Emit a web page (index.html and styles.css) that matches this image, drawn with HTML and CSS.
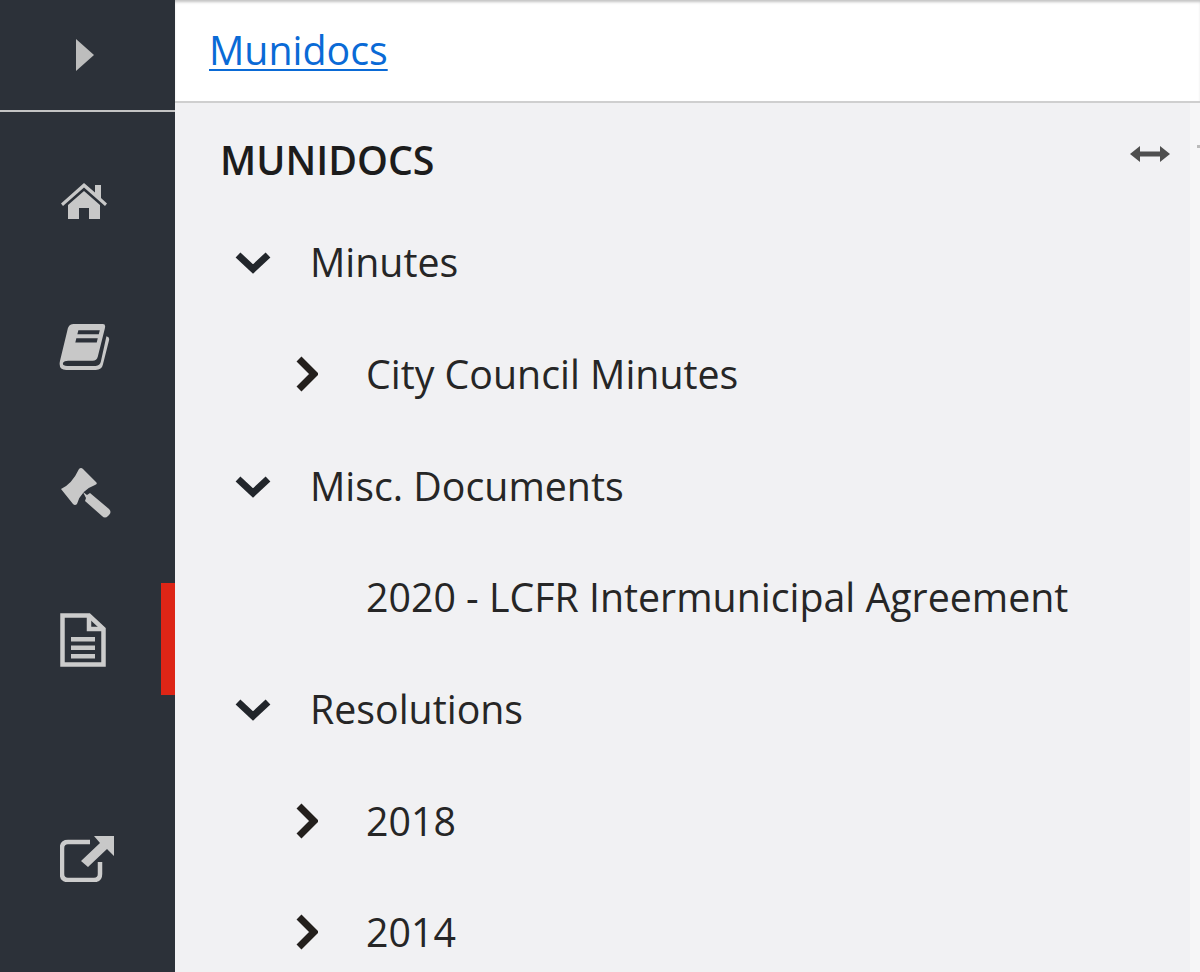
FILE: index.html
```html
<!DOCTYPE html>
<html lang="en">
<head>
<meta charset="utf-8">
<title>Munidocs</title>
<link rel="stylesheet" href="styles.css">
</head>
<body>
<div class="app">
  <aside class="sidebar">
    <div class="toggle">
      <svg class="ic-toggle" viewBox="0 0 20 34"><path d="M1 1 L19 17 L1 33 Z"/></svg>
    </div>
    <nav class="nav">
      <a class="nav-item">
        <svg class="ic" viewBox="0 0 48 40"><path d="M24 3 L35 12.500 V5 H41 V18 L47 23.500 L45 26 L24 7.500 L3 26 L1 23.500 Z"/><path d="M24 11 L40 25 V39 H29 V28 H19 V39 H8 V25 Z"/></svg>
      </a>
      <a class="nav-item">
        <svg class="ic ic-book" viewBox="0 0 50 46"><path fill-rule="evenodd" d="M14 1 H43 Q46 1 45 5 L38 33 Q37 37 33 37 H9 Q5 37 4 39 Q3 42 8 42 H36 Q40 42 41 38 L46.500 13 Q50 14 49 17 L43 41 Q42 46 36 46 H7 Q-1 46 1 37 L8 8 Q9 1 14 1 Z M19 7 L18 11 H39 L40 7 Z M17 15 L16 19 H37 L38 15 Z"/></svg>
      </a>
      <a class="nav-item">
        <svg class="ic ic-gavel" viewBox="0 0 52 50"><path d="M1 21 Q12 16 19 1 Q21 -1 23 1 L36 14 Q38 16 35 17 Q21 22 17 36 Q15 38 13 36 Z"/><path d="M23 24 L27 27 L30 25 L49 41 Q52 44 49 47 L48 48 Q45 51 42 48 L25 33 L26 30 Z"/></svg>
      </a>
      <a class="nav-item doc-active">
        <svg class="ic ic-doc" viewBox="0 0 46 54"><path class="line" d="M2.500 2.500 H29 L43.500 16 V51.500 H2.500 Z"/><path class="line" d="M29 2.500 V16 H43.500"/><path d="M11 24 H35 V28.500 H11 Z M11 32.500 H35 V37 H11 Z M11 41 H35 V45.500 H11 Z"/></svg>
      </a>
      <a class="nav-item nav-external">
        <svg class="ic ic-ext" viewBox="0 0 54 46"><path class="line" d="M30 6 H8 Q2 6 2 12 V38 Q2 44 8 44 H34 Q40 44 40 38 V26"/><path d="M34 0 H54 V20 L47 13 L28 31 L21 25 L40 7 Z"/></svg>
      </a>
    </nav>
  </aside>
  <main class="main">
    <header class="topbar"><a class="crumb" href="#">Munidocs</a></header>
    <section class="content">
      <div class="tree">
        <div class="tree-head">
          <h1 class="title">MUNIDOCS</h1>
          <svg class="ic-resize" viewBox="0 0 40 16"><path d="M0 8 L10 0 V5.500 H30 V0 L40 8 L30 16 V10.500 H10 V16 Z"/></svg>
        </div>
        <ul class="list">
          <li class="row"><svg class="chev" viewBox="0 0 38 24"><path d="M4 5 L19 19 L34 5"/></svg><span>Minutes</span></li>
          <li class="row sub"><svg class="chev right" viewBox="0 0 24 38"><path d="M5 4 L20 19 L5 34"/></svg><span>City Council Minutes</span></li>
          <li class="row"><svg class="chev" viewBox="0 0 38 24"><path d="M4 5 L19 19 L34 5"/></svg><span>Misc. Documents</span></li>
          <li class="row sub"><span class="chev-gap"></span><span>2020 - LCFR Intermunicipal Agreement</span></li>
          <li class="row"><svg class="chev" viewBox="0 0 38 24"><path d="M4 5 L19 19 L34 5"/></svg><span>Resolutions</span></li>
          <li class="row sub"><svg class="chev right" viewBox="0 0 24 38"><path d="M5 4 L20 19 L5 34"/></svg><span>2018</span></li>
          <li class="row sub"><svg class="chev right" viewBox="0 0 24 38"><path d="M5 4 L20 19 L5 34"/></svg><span>2014</span></li>
        </ul>
      </div>
      <div class="scrollbar"><span class="scroll-arrow"></span></div>
    </section>
  </main>
</div>
</body>
</html>
```
FILE: styles.css
```css
* { box-sizing: border-box; }
html, body { margin: 0; height: 100%; overflow: hidden; }
body { font-family: "Open Sans", "Liberation Sans", sans-serif; color: #232323; }
.app { display: flex; height: 972px; width: 1200px; }

.sidebar { width: 175px; flex: none; background: #2c3139; display: flex; flex-direction: column; }
.toggle { height: 112px; flex: none; border-bottom: 2px solid #c4c4c4; display: flex; align-items: center; justify-content: center; padding-right: 5px; }
.ic-toggle { width: 20px; height: 34px; fill: #bdbdbd; display: block; }
.nav { display: flex; flex-direction: column; padding-top: 15px; }
.nav-item { height: 146.5px; display: flex; align-items: center; justify-content: center; padding-right: 7px; position: relative; }
.ic { width: 48px; height: 48px; fill: #c8c8c8; display: block; }
.ic-book { width: 51px; height: 47px; }
.ic-gavel { width: 52px; height: 50px; margin-left: 4px; }
.ic-doc { width: 46px; height: 54px; margin-left: -3px; }
.ic-ext { width: 54px; height: 46px; margin-left: 5px; }
.line { fill: none; stroke: #cccccc; stroke-width: 4.500; }
.doc-active::after { content: ""; position: absolute; right: 0; top: 16px; width: 14px; height: 112px; background: #dd2516; }
.nav-external { margin-top: 73px; }

.main { flex: 1; display: flex; flex-direction: column; min-width: 0; }
.topbar { height: 103px; flex: none; background: #fff; border-bottom: 2px solid #cfcfcf; box-shadow: inset 0 3px 3px -1px #c2c2c2; padding: 25px 0 0 34px; }
.crumb { font-size: 39.300px; line-height: 50px; color: #0a6ad6; text-decoration: underline; text-decoration-thickness: 2px; text-underline-offset: 4px; }

.content { flex: 1; display: flex; background: #f1f1f3; min-height: 0; }
.tree { flex: 1; min-width: 0; padding: 32px 0 0 45px; }
.tree-head { display: flex; align-items: center; justify-content: space-between; height: 50px; padding-right: 20px; }
.title { margin: 0; font-size: 39.300px; line-height: 50px; font-weight: 600; color: #1c1c1c; }
.ic-resize { width: 40px; height: 16px; fill: #4f4f4f; display: block; margin-top: -12px; }
.list { list-style: none; margin: 0; padding: 21.500px 0 0 14px; }
.row { height: 111.700px; display: flex; align-items: center; font-size: 39.300px; line-height: 50px; color: #262626; white-space: nowrap; }
.row.sub { padding-left: 56px; }
.chev { width: 38px; height: 24px; fill: none; stroke: #22262b; stroke-width: 7; margin-right: 38px; flex: none; display: block; }
.chev.right { width: 24px; height: 38px; margin-right: 48px; margin-left: 4px; stroke: #231f1c; }
.chev-gap { width: 76px; flex: none; }
.scrollbar { width: 10px; flex: none; background: #f6f6f7; position: relative; }
.scroll-arrow { position: absolute; right: 0; top: 42px; width: 3px; height: 3px; background: #bbb; }
```
